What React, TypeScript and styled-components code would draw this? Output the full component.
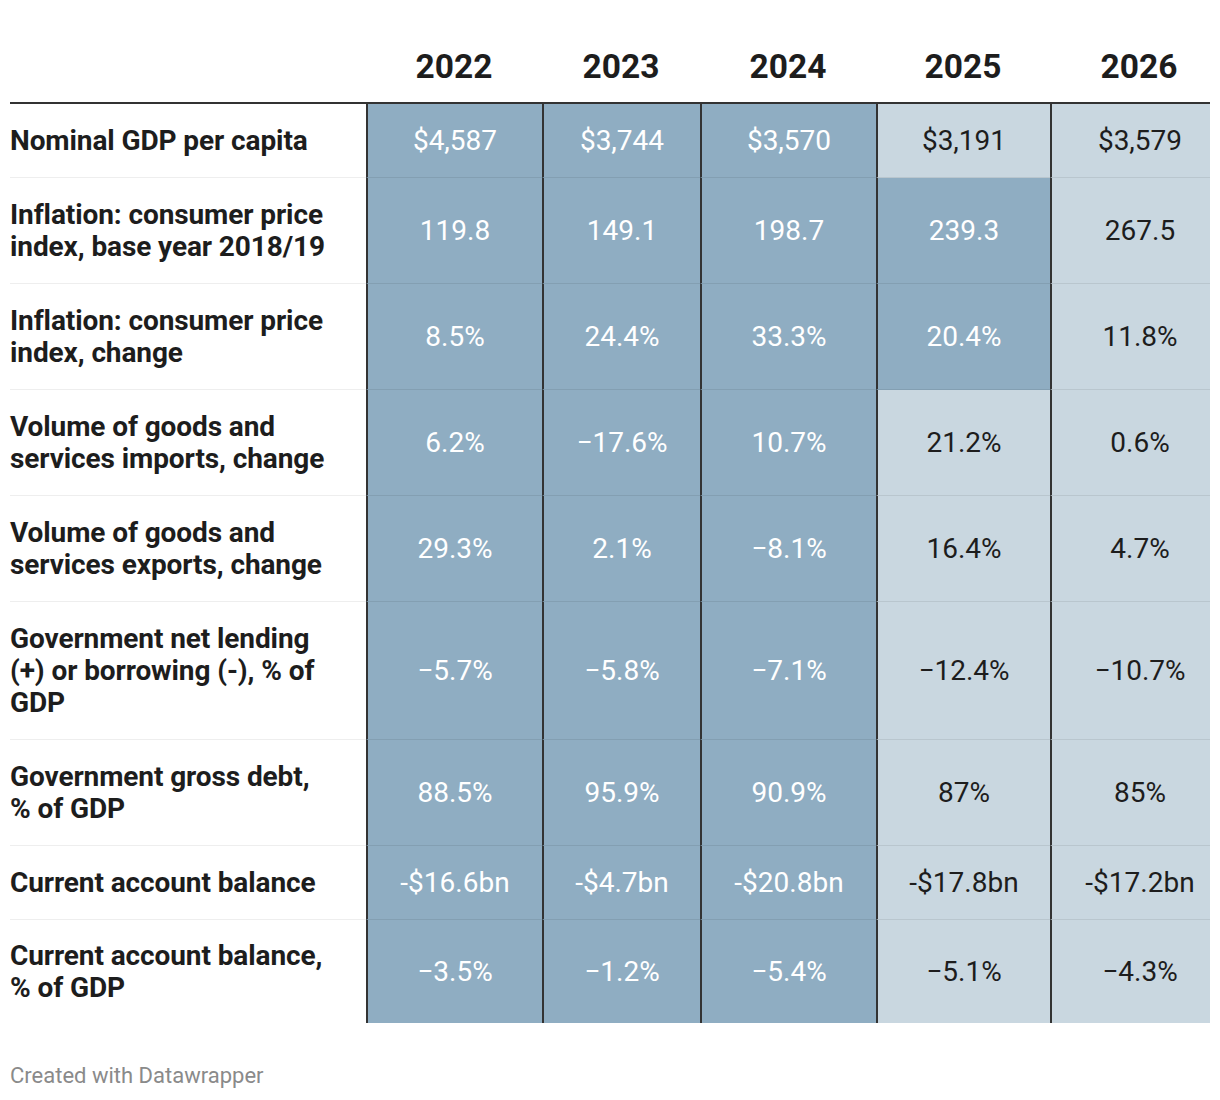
import React from "react";
import styled, { createGlobalStyle } from "styled-components";

const GlobalStyle = createGlobalStyle`
  body {
    margin: 0;
    background: #ffffff;
    font-family: Roboto, "Liberation Sans", sans-serif;
    color: #1d1d1d;
  }
`;

const years = ["2022", "2023", "2024", "2025", "2026"];

// dark = actual figures, light = IMF projections (except the highlighted ones)
const rows: { label: string[]; values: string[]; dark: number }[] = [
  { label: ["Nominal GDP per capita"], values: ["$4,587", "$3,744", "$3,570", "$3,191", "$3,579"], dark: 3 },
  { label: ["Inflation: consumer price", "index, base year 2018/19"], values: ["119.8", "149.1", "198.7", "239.3", "267.5"], dark: 4 },
  { label: ["Inflation: consumer price", "index, change"], values: ["8.5%", "24.4%", "33.3%", "20.4%", "11.8%"], dark: 4 },
  { label: ["Volume of goods and", "services imports, change"], values: ["6.2%", "\u221217.6%", "10.7%", "21.2%", "0.6%"], dark: 3 },
  { label: ["Volume of goods and", "services exports, change"], values: ["29.3%", "2.1%", "\u22128.1%", "16.4%", "4.7%"], dark: 3 },
  { label: ["Government net lending", "(+) or borrowing (-), % of", "GDP"], values: ["\u22125.7%", "\u22125.8%", "\u22127.1%", "\u221212.4%", "\u221210.7%"], dark: 3 },
  { label: ["Government gross debt,", "% of GDP"], values: ["88.5%", "95.9%", "90.9%", "87%", "85%"], dark: 3 },
  { label: ["Current account balance"], values: ["-$16.6bn", "-$4.7bn", "-$20.8bn", "-$17.8bn", "-$17.2bn"], dark: 3 },
  { label: ["Current account balance,", "% of GDP"], values: ["\u22123.5%", "\u22121.2%", "\u22125.4%", "\u22125.1%", "\u22124.3%"], dark: 3 },
];

const Page = styled.div`
  width: 1200px;
  padding: 30px 10px 0;
`;

const Table = styled.div`
  display: grid;
  grid-template-columns: 356px 176px 158px 176px 174px 160px;
`;

const HeadCell = styled.div<{ $edge?: boolean }>`
  padding: 21px 0 19px ${(p) => (p.$edge ? "18px" : "0")};
  font-size: 33.5px;
  line-height: 32px;
  font-weight: 700;
  text-align: center;
  color: #1d1d1d;
  border-bottom: 2px solid #333333;
`;

const LabelCell = styled.div<{ $last: boolean }>`
  padding: ${(p) => (p.$last ? "20px 0 19px" : "21px 0 20px")};
  font-size: 28px;
  line-height: 32px;
  font-weight: 700;
  letter-spacing: -0.1px;
  color: #1d1d1d;
  border-bottom: ${(p) => (p.$last ? "none" : "1px solid #eeeeee")};
`;

const ValueCell = styled.div<{ $dark: boolean; $edge: boolean; $last: boolean }>`
  display: flex;
  align-items: center;
  justify-content: center;
  padding-left: ${(p) => (p.$edge ? "18px" : "0")};
  font-size: 28px;
  line-height: 32px;
  font-weight: 400;
  background: ${(p) => (p.$dark ? "#8fadc2" : "#c9d7e0")};
  color: ${(p) => (p.$dark ? "#ffffff" : "#1d1d1d")};
  border-left: 2px solid #333333;
  border-bottom: ${(p) => (p.$last ? "none" : "1px solid rgba(0, 0, 0, 0.08)")};
`;

const Footer = styled.div`
  margin-top: 41px;
  font-size: 22px;
  line-height: 24px;
  color: #8a8a8a;
`;

export default function App() {
  return (
    <Page>
      <GlobalStyle />
      <Table>
        <HeadCell />
        {years.map((y, i) => (
          <HeadCell key={y} $edge={i === years.length - 1}>
            {y}
          </HeadCell>
        ))}
        {rows.map((row, ri) => {
          const last = ri === rows.length - 1;
          return (
            <React.Fragment key={ri}>
              <LabelCell $last={last}>
                {row.label.map((l, i) => (
                  <React.Fragment key={i}>
                    {i > 0 && <br />}
                    {l}
                  </React.Fragment>
                ))}
              </LabelCell>
              {row.values.map((v, ci) => (
                <ValueCell
                  key={ci}
                  $dark={ci < row.dark}
                  $last={last}
                  $edge={ci === row.values.length - 1}
                >
                  {v}
                </ValueCell>
              ))}
            </React.Fragment>
          );
        })}
      </Table>
      <Footer>Created with Datawrapper</Footer>
    </Page>
  );
}
